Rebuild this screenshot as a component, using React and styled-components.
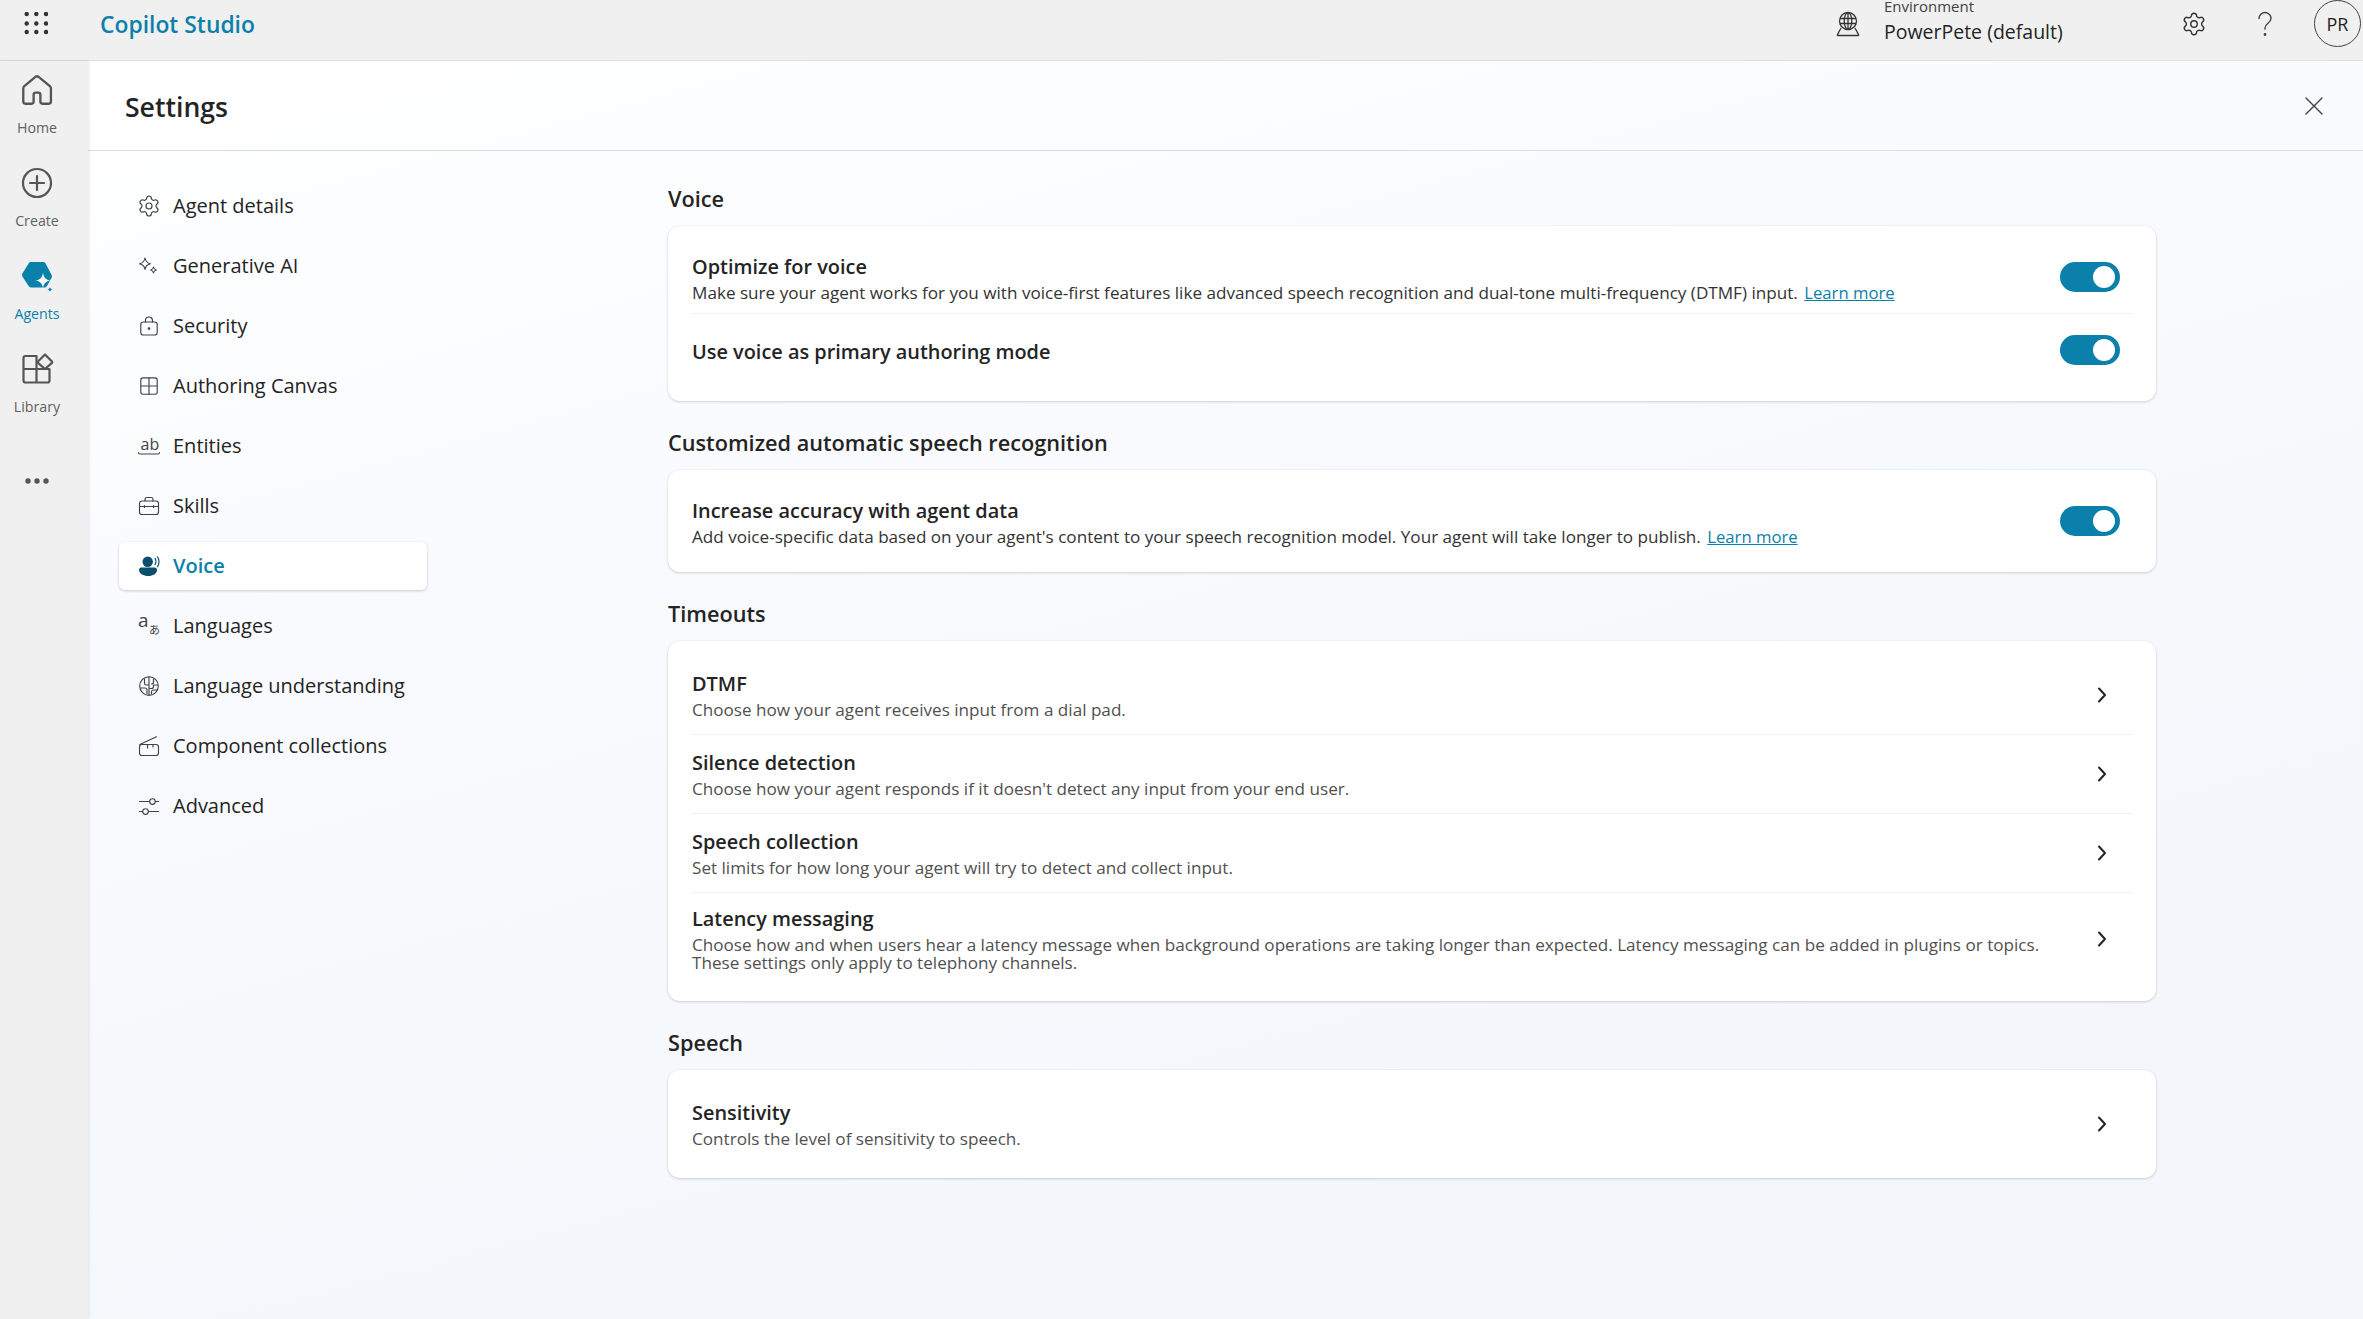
import React from 'react';
import styled, { createGlobalStyle } from 'styled-components';
import { Settings as GearIcon } from 'lucide-react';

const TEAL = '#0b80aa';
const INK = '#242424';

const Global = createGlobalStyle`
  * { box-sizing: border-box; }
  html, body { margin: 0; padding: 0; height: 100%; overflow: hidden; }
  body { font-family: "Open Sans", "Noto Sans", "Liberation Sans", sans-serif; color: ${INK}; background: #f0f0f0; }
  #root { height: 100%; }
`;

const Page = styled.div`
  display: flex; flex-direction: column; width: 2363px; height: 1319px; overflow: hidden; background: #f0f0f0;
`;
const TopBar = styled.header`
  flex: 0 0 61px; display: flex; align-items: center; height: 61px; padding: 0 2px 13px 24px;
  background: #f0f0f0; border-bottom: 1px solid #e0e0e0; overflow: hidden;
`;
const Waffle = styled.svg`width: 24px; height: 24px; fill: #333; flex: none;`;
const Brand = styled.div`
  margin: 2px 0 0 52px; font-size: 22.85px; font-weight: 600; line-height: 30px; color: ${TEAL};
`;
const TopRight = styled.div`margin-left: auto; display: flex; align-items: center;`;
const Globe = styled.svg`
  width: 26px; height: 26px; flex: none; margin-right: 23px; fill: none; stroke: #333; stroke-width: 1.3;
`;
const Env = styled.div`width: 297px; margin-top: -9px; flex: none;`;
const EnvLabel = styled.div`font-size: 15px; line-height: 25px; color: #424242;`;
const EnvName = styled.div`font-size: 19.5px; line-height: 25px; color: ${INK};`;
const TopGear = styled(GearIcon)`width: 26px; height: 26px; color: #333; stroke-width: 1.3; flex: none;`;
const Question = styled.svg`
  width: 26px; height: 26px; flex: none; margin-left: 45px; fill: none; stroke: #424242; stroke-width: 1.4; stroke-linecap: round;
`;
const Avatar = styled.div`
  width: 47px; height: 47px; margin-left: 36px; flex: none; border-radius: 50%; border: 1px solid #424242;
  display: flex; align-items: center; justify-content: center; font-size: 18px; color: ${INK};
`;

const Shell = styled.div`flex: 1; display: flex; min-height: 0;`;
const Rail = styled.nav`
  flex: 0 0 88px; display: flex; flex-direction: column; align-items: center; gap: 26px; padding: 10px 14px 0 0;
  background: #f0f0f0; box-shadow: 1px 0 3px rgba(0,0,0,.09); position: relative; z-index: 1;
`;
const RailItem = styled.div`display: flex; flex-direction: column; align-items: center; width: 74px;`;
const RailIconBox = styled.div`height: 38px; display: flex; align-items: center; justify-content: center;`;
const RailStroke = styled.svg`width: 38px; height: 38px; fill: none; stroke: #555; stroke-width: 2.2; stroke-linejoin: round; stroke-linecap: round;`;
const RailLabel = styled.div`
  margin-top: 9px; font-size: 14.2px; line-height: 20px; color: ${p => (p.$active ? TEAL : '#616161')};
`;
const RailMore = styled.svg`width: 26px; height: 20px; margin-top: 28px; fill: #555;`;

const Content = styled.main`
  flex: 1; display: flex; flex-direction: column; min-width: 0;
  background: linear-gradient(165deg, #ffffff 0%, #f8fafd 35%, #f3f7fb 85%);
`;
const Head = styled.div`
  flex: 0 0 90px; display: flex; align-items: center; justify-content: space-between;
  padding: 3px 40px 0 37px; border-bottom: 1px solid #dcdcdc;
`;
const Title = styled.h1`margin: 0; font-size: 26.6px; font-weight: 600; line-height: 36px; color: ${INK};`;
const Close = styled.svg`width: 18px; height: 18px; margin-top: -2px; fill: none; stroke: #424242; stroke-width: 1.4; stroke-linecap: round;`;

const Body = styled.div`flex: 1; display: flex; min-height: 0;`;
const SideNav = styled.ul`
  flex: 0 0 580px; list-style: none; margin: 0; padding: 31px 0 0 31px; display: flex; flex-direction: column; gap: 12px;
`;
const NavRow = styled.li`
  width: 308px; height: 48px; display: flex; align-items: center; gap: 12px; padding-left: 18px;
  border-radius: 6px; font-size: 20px; line-height: 28px;
  color: ${p => (p.$active ? TEAL : INK)}; font-weight: ${p => (p.$active ? 600 : 400)};
  background: ${p => (p.$active ? '#fff' : 'transparent')};
  box-shadow: ${p => (p.$active ? '0 1px 3px rgba(0,0,0,.2)' : 'none')};
`;
const NavSvg = styled.svg`
  width: 24px; height: 24px; flex: none; overflow: visible; fill: none; stroke: #424242; stroke-width: 1.15; stroke-linecap: round; stroke-linejoin: round;
`;
const NavGear = styled(GearIcon)`width: 24px; height: 24px; flex: none; color: #424242; stroke-width: 1.2;`;
const IconLetters = styled.text`
  font-family: "Open Sans", "Noto Sans CJK JP", sans-serif; fill: #424242; stroke: none; font-size: ${p => p.$size}px;
`;

const Main = styled.div`width: 1488px; padding-top: 33px; flex: none;`;
const Section = styled.section`& + & { margin-top: 27px; }`;
const SectionHead = styled.h2`margin: 0 0 12px; font-size: 21.7px; font-weight: 600; line-height: 30px; color: ${INK};`;
const Card = styled.div`
  background: #fff; border-radius: 12px; padding: 0 24px;
  box-shadow: 0 1px 3px rgba(0,0,0,.16), 0 0 2px rgba(0,0,0,.05);
`;
const Row = styled.div`
  display: flex; align-items: center; justify-content: space-between;
  padding: ${p => p.$top}px 12px ${p => p.$bottom}px 0;
  & + & { border-top: 1px solid #f0f0f0; }
`;
const RowText = styled.div`min-width: 0;`;
const RowTitle = styled.div`font-size: 19.9px; font-weight: 600; line-height: 28px; color: ${INK};`;
const RowDesc = styled.div`
  margin-top: 3px; font-size: 17.12px; line-height: 18px; white-space: nowrap; color: ${p => (p.$muted ? '#505050' : '#333')};
`;
const Link = styled.a`color: ${TEAL}; text-decoration: underline; font-size: 16.7px; margin-left: 2px;`;
const Toggle = styled.div`
  flex: none; width: 60px; height: 30px; border-radius: 15px; background: ${TEAL};
  display: flex; align-items: center; justify-content: flex-end; padding-right: 5px;
  margin-top: ${p => (p.$lift ? -4 : -1)}px;
  &::after { content: ''; width: 22px; height: 22px; border-radius: 50%; background: #fff; }
`;
const Chevron = styled.svg`
  flex: none; width: 18px; height: 18px; margin-right: 9px; fill: none; stroke: ${INK}; stroke-width: 2; stroke-linecap: round; stroke-linejoin: round;
`;

const HomeI = () => <RailStroke viewBox="1 1 36 36"><path d="M17.2 6.8a2.8 2.8 0 0 1 3.6 0l10.4 8.6c.6.5 1 1.3 1 2.1V30a2 2 0 0 1-2 2h-6a2 2 0 0 1-2-2v-6.5a2 2 0 0 0-2-2h-2.4a2 2 0 0 0-2 2V30a2 2 0 0 1-2 2H8a2 2 0 0 1-2-2V17.5c0-.8.4-1.6 1-2.1z"/></RailStroke>;
const CreateI = () => <RailStroke viewBox="0 0 38 38"><circle cx="19" cy="19" r="14"/><path d="M19 12v14M12 19h14"/></RailStroke>;
const AgentsI = () => (
  <svg width="38" height="38" viewBox="0 0 38 38">
    <path d="M13 5h12.200c1 0 1.900.5 2.400 1.400L33.600 18c.5.9.5 2 0 2.800L29 29c-.5.9-1.400 1.500-2.400 1.500H13c-1 0-1.900-.5-2.400-1.400L4.400 19.400a2.800 2.800 0 0 1 0-2.800l6.200-10.200C11.100 5.500 12 5 13 5z" fill={TEAL}/>
    <path d="M25 16c.8 4.600 2.900 6.700 7.500 7.500-4.600.8-6.700 2.900-7.500 7.500-.8-4.600-2.900-6.700-7.500-7.500 4.600-.8 6.700-2.900 7.500-7.500z" fill="#fff"/>
    <path d="M32 29c.4 2.200 1.300 3.100 3.500 3.500-2.200.4-3.100 1.300-3.500 3.500-.4-2.200-1.300-3.100-3.500-3.500 2.200-.4 3.100-1.300 3.500-3.500z" fill={TEAL} stroke="#f0f0f0" strokeWidth="1"/>
  </svg>
);
const LibraryI = () => <RailStroke viewBox="0 0 38 38"><path d="M5.500 19h13v13.500H7.500a2 2 0 0 1-2-2zM18.500 19h13v11.500a2 2 0 0 1-2 2h-11zM7.500 6h11v13h-13V8a2 2 0 0 1 2-2z"/><path d="M27 4.500l7 7a1 1 0 0 1 0 1.400l-7 6.100-7-6.100a1 1 0 0 1 0-1.400z" fill="#f0f0f0"/></RailStroke>;

const SparkI = () => <NavSvg viewBox="0 0 24 24"><path d="M8 4c.6 3.500 2 5 5.500 5.800C10 10.500 8.600 12 8 15.500 7.400 12 6 10.500 2.500 9.800 6 9 7.400 7.500 8 4z"/><path d="M16.500 13c.3 1.800 1.100 2.600 2.900 3-1.800.4-2.600 1.200-2.900 3-.3-1.800-1.100-2.600-2.900-3 1.800-.4 2.600-1.200 2.900-3z"/></NavSvg>;
const LockI = () => <NavSvg viewBox="0 0 24 24"><rect x="3.800" y="8" width="16.400" height="13" rx="2.500"/><path d="M8.500 8V6.500a3.500 3.500 0 0 1 7 0V8"/><circle cx="12" cy="14.500" r=".8" fill="#424242"/></NavSvg>;
const GridI = () => <NavSvg viewBox="0 0 24 24"><rect x="3.800" y="3.800" width="16.400" height="16.400" rx="2.200"/><path d="M12 3.800v16.400M3.800 12h16.400"/></NavSvg>;
const AbI = () => <NavSvg viewBox="0 0 24 24"><IconLetters x="3.500" y="15.500" $size={16}>ab</IconLetters><path d="M1.500 18.500c0 1 .6 1.500 1.500 1.500h18c.9 0 1.500-.5 1.500-1.500"/></NavSvg>;
const BriefI = () => <NavSvg viewBox="0 0 24 24"><rect x="2.500" y="7" width="19" height="13.500" rx="2.500"/><path d="M8 7V5.500a2 2 0 0 1 2-2h4a2 2 0 0 1 2 2V7M2.500 12.500h19M7.500 11.500v2M16.500 11.500v2"/></NavSvg>;
const VoiceI = () => (
  <NavSvg viewBox="0 0 24 24">
    <circle cx="10.700" cy="7.800" r="5.200" fill="#0a4f6d" stroke="none"/>
    <path d="M4 13.500h13.500a2.500 2.500 0 0 1 2.500 2.500c0 3.800-4 6-8.700 6S2 19.800 2 16a2.500 2.500 0 0 1 2-2.500z" fill="#0a4f6d" stroke="none"/>
    <path d="M18 4.500c1.300 1.500 1.300 4.500 0 6M20.500 2.800c2 2.400 2 7.500 0 9.900" stroke="#0a4f6d"/>
  </NavSvg>
);
const LangI = () => <NavSvg viewBox="0 0 24 24"><IconLetters x="1" y="12.500" $size={19}>a</IconLetters><IconLetters x="12" y="20" $size={11}>あ</IconLetters></NavSvg>;
const BrainI = () => <NavSvg viewBox="0 0 24 24"><circle cx="12" cy="12" r="9.300"/><path d="M12 3v18M7.500 5v4.500c0 1 1 1.500 2 1.500H12M3.500 14h4.500a2 2 0 0 1 2 2v3.500M16.500 5v3a2 2 0 0 1-2 2M12 14.500h2.500a2 2 0 0 0 2-2V11h4M14.500 20v-2.500a2 2 0 0 1 2-1.500H20"/></NavSvg>;
const CollectionI = () => <NavSvg viewBox="0 0 24 24"><rect x="2.500" y="10.500" width="19" height="11" rx="2.500"/><path d="M2.800 10.500L19.500 2.800M13 10.500h-2.500V14M16 10.500v2.500"/></NavSvg>;
const SlidersI = () => <NavSvg viewBox="0 0 24 24"><path d="M2.500 7.500h10M18.500 7.500h3M2.500 17.500h3M11.500 17.500h10"/><circle cx="15.500" cy="7.500" r="2.800"/><circle cx="8.500" cy="17.500" r="2.800"/></NavSvg>;

const NAV = [
  ['Agent details', <NavGear key="g" />], ['Generative AI', <SparkI key="s" />], ['Security', <LockI key="l" />],
  ['Authoring Canvas', <GridI key="c" />], ['Entities', <AbI key="a" />], ['Skills', <BriefI key="b" />],
  ['Voice', <VoiceI key="v" />, true], ['Languages', <LangI key="n" />], ['Language understanding', <BrainI key="u" />],
  ['Component collections', <CollectionI key="o" />], ['Advanced', <SlidersI key="d" />],
];

const Arrow = () => <Chevron viewBox="0 0 18 18"><path d="M6 2.500L12 9l-6 6.500"/></Chevron>;

export default function App() {
  return (
    <Page>
      <Global />
      <TopBar>
        <Waffle viewBox="0 0 24 24">
          {[2.700, 12.300, 22].flatMap(x => [2, 11.500, 20].map(y => <circle key={`${x}-${y}`} cx={x} cy={y} r="2.200" />))}
        </Waffle>
        <Brand>Copilot Studio</Brand>
        <TopRight>
          <Globe viewBox="0 0 26 26">
            <circle cx="13" cy="10" r="8.500"/>
            <ellipse cx="13" cy="10" rx="3.800" ry="8.500"/>
            <path d="M5 7.500h16M5 12.500h16M13 1.500v17M6 17l-3.500 6.500a.6.6 0 0 0 .5 1h20a.6.6 0 0 0 .5-1L20 17"/>
          </Globe>
          <Env>
            <EnvLabel>Environment</EnvLabel>
            <EnvName>PowerPete (default)</EnvName>
          </Env>
          <TopGear />
          <Question viewBox="0 0 26 26"><path d="M7 7.500C7 4 9.800 1.500 13 1.500s6 2.500 6 5.700c0 2.300-1.200 3.600-3 5-1.800 1.400-3 2.500-3 4.800v1"/><circle cx="13" cy="23.500" r=".7" fill="#424242"/></Question>
          <Avatar>PR</Avatar>
        </TopRight>
      </TopBar>
      <Shell>
        <Rail>
          <RailItem><RailIconBox><HomeI /></RailIconBox><RailLabel>Home</RailLabel></RailItem>
          <RailItem><RailIconBox><CreateI /></RailIconBox><RailLabel>Create</RailLabel></RailItem>
          <RailItem><RailIconBox><AgentsI /></RailIconBox><RailLabel $active>Agents</RailLabel></RailItem>
          <RailItem><RailIconBox><LibraryI /></RailIconBox><RailLabel>Library</RailLabel></RailItem>
          <RailMore viewBox="0 0 26 20"><circle cx="4" cy="10" r="2.700"/><circle cx="13" cy="10" r="2.700"/><circle cx="22" cy="10" r="2.700"/></RailMore>
        </Rail>
        <Content>
          <Head>
            <Title>Settings</Title>
            <Close viewBox="0 0 18 18"><path d="M1 1l16 16M17 1L1 17"/></Close>
          </Head>
          <Body>
            <SideNav>
              {NAV.map(([label, icon, active]) => (
                <NavRow key={label} $active={active}>{icon}{label}</NavRow>
              ))}
            </SideNav>
            <Main>
              <Section>
                <SectionHead>Voice</SectionHead>
                <Card>
                  <Row $top={27} $bottom={11}>
                    <RowText>
                      <RowTitle>Optimize for voice</RowTitle>
                      <RowDesc>Make sure your agent works for you with voice-first features like advanced speech recognition and dual-tone multi-frequency (DTMF) input. <Link>Learn more</Link></RowDesc>
                    </RowText>
                    <Toggle />
                  </Row>
                  <Row $top={24} $bottom={35}>
                    <RowText><RowTitle>Use voice as primary authoring mode</RowTitle></RowText>
                    <Toggle $lift />
                  </Row>
                </Card>
              </Section>
              <Section>
                <SectionHead>Customized automatic speech recognition</SectionHead>
                <Card>
                  <Row $top={27} $bottom={26}>
                    <RowText>
                      <RowTitle>Increase accuracy with agent data</RowTitle>
                      <RowDesc>Add voice-specific data based on your agent's content to your speech recognition model. Your agent will take longer to publish. <Link>Learn more</Link></RowDesc>
                    </RowText>
                    <Toggle />
                  </Row>
                </Card>
              </Section>
              <Section>
                <SectionHead>Timeouts</SectionHead>
                <Card>
                  <Row $top={29} $bottom={15}>
                    <RowText><RowTitle>DTMF</RowTitle><RowDesc $muted>Choose how your agent receives input from a dial pad.</RowDesc></RowText>
                    <Arrow />
                  </Row>
                  <Row $top={14} $bottom={15}>
                    <RowText><RowTitle>Silence detection</RowTitle><RowDesc $muted>Choose how your agent responds if it doesn't detect any input from your end user.</RowDesc></RowText>
                    <Arrow />
                  </Row>
                  <Row $top={14} $bottom={15}>
                    <RowText><RowTitle>Speech collection</RowTitle><RowDesc $muted>Set limits for how long your agent will try to detect and collect input.</RowDesc></RowText>
                    <Arrow />
                  </Row>
                  <Row $top={12} $bottom={29}>
                    <RowText>
                      <RowTitle>Latency messaging</RowTitle>
                      <RowDesc $muted>Choose how and when users hear a latency message when background operations are taking longer than expected. Latency messaging can be added in plugins or topics.<br />These settings only apply to telephony channels.</RowDesc>
                    </RowText>
                    <Arrow />
                  </Row>
                </Card>
              </Section>
              <Section>
                <SectionHead>Speech</SectionHead>
                <Card>
                  <Row $top={29} $bottom={30}>
                    <RowText><RowTitle>Sensitivity</RowTitle><RowDesc $muted>Controls the level of sensitivity to speech.</RowDesc></RowText>
                    <Arrow />
                  </Row>
                </Card>
              </Section>
            </Main>
          </Body>
        </Content>
      </Shell>
    </Page>
  );
}
